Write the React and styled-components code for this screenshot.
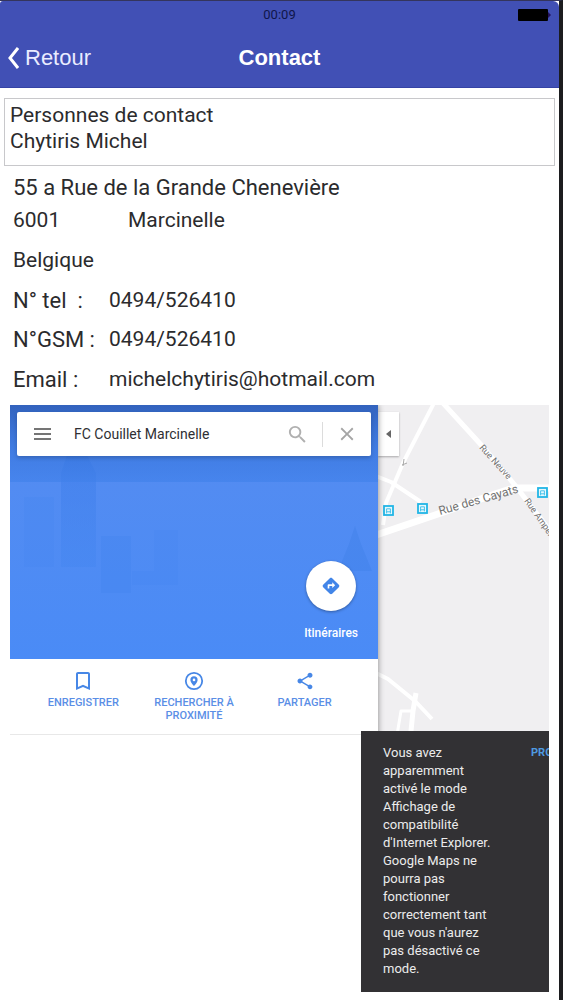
import React from 'react';
import styled, { createGlobalStyle } from 'styled-components';
import { MdBookmarkBorder, MdClose, MdDirections, MdSearch, MdShare } from 'react-icons/md';

const GlobalStyle = createGlobalStyle`
    * {
        box-sizing: border-box;
    }
    body {
        margin: 0;
        background-color: #fff;
        color: #2b2b2d;
        font-family: Roboto, "Liberation Sans", sans-serif;
    }
    button {
        border: none;
        padding: 0;
        background: none;
        font-family: inherit;
        cursor: pointer;
    }
`;

const Screen = styled.div`
    min-height: 100vh;
    display: flex;
    flex-direction: column;
    background-color: #fff;
    border-top: 1px solid #34355c;
    border-right: 4px solid #1c1d1f;
`;

const Header = styled.header`
    background-color: #4150b5;
    border-bottom: 1px solid #3543a5;
    border-radius: 3px 6px 0 0;
`;

const StatusBar = styled.div`
    height: 27px;
    padding: 0 8px;
    display: grid;
    grid-template-columns: 1fr auto 1fr;
    align-items: center;
    font-size: 13px;
    color: #10164a;
`;

const Clock = styled.span`
    grid-column: 2;
`;

const Battery = styled.svg`
    justify-self: end;
`;

const NavBar = styled.nav`
    height: 59px;
    padding: 0 8px;
    display: grid;
    grid-template-columns: 1fr auto 1fr;
    align-items: center;
    color: #fff;
    font-family: "Liberation Sans", Arial, sans-serif;
`;

const Back = styled.a`
    display: flex;
    align-items: center;
    gap: 6px;
    color: #e9ecff;
    font-size: 22px;
    text-decoration: none;
`;

const Title = styled.h1`
    margin: 0;
    font-size: 22px;
    font-weight: 700;
`;

const People = styled.section`
    height: 68px;
    margin: 10px 4px 0;
    padding: 3px 5px;
    border: 1px solid #c8c8cb;
    font-size: 21px;
    line-height: 26px;
`;

const Line = styled.p`
    margin: 0;
`;

const Details = styled.section`
    padding: 2px 13px 11px;
    font-size: 21px;
`;

const Row = styled.div`
    height: ${(props) => props.height || 40}px;
    display: grid;
    grid-template-columns: ${(props) => props.label || 96}px 1fr;
    align-items: center;
    white-space: pre;
`;

const Label = styled.span`
    font-size: 22px;
`;

const Address = styled.p`
    height: ${(props) => props.height}px;
    margin: 0;
    display: flex;
    align-items: center;
    font-size: ${(props) => props.size || 21}px;
`;

const MapFrame = styled.section`
    position: relative;
    margin: 0 10px 8px;
    flex: 1;
    min-height: 587px;
    display: grid;
    grid-template-columns: 368px 1fr;
    overflow: hidden;
`;

const Pane = styled.div`
    position: relative;
    z-index: 1;
    background-color: #fff;
    box-shadow: 0 0 6px rgba(0, 0, 0, 0.45);
`;

const Hero = styled.div`
    position: relative;
    height: 254px;
    padding: 7px;
    display: flex;
    flex-direction: column;
    justify-content: space-between;
    background-color: #4c8bf5;
`;

const Skyline = styled.svg`
    position: absolute;
    inset: 0;
    width: 100%;
    height: 100%;
`;

const SearchBox = styled.form`
    position: relative;
    height: 44px;
    padding: 0 13px 0 16px;
    display: flex;
    align-items: center;
    background-color: #fff;
    border-radius: 2px;
    box-shadow: 0 2px 4px rgba(0, 0, 0, 0.2);
`;

const SearchInput = styled.input`
    flex: 1;
    min-width: 0;
    margin-left: 23px;
    padding: 0;
    border: none;
    outline: none;
    font-family: inherit;
    font-size: 14px;
    color: #2f2f33;
`;

const IconButton = styled.button`
    height: 26px;
    display: flex;
    align-items: center;
    justify-content: center;
    color: ${(props) => props.color || '#757575'};
`;

const Divider = styled.span`
    width: 1px;
    height: 25px;
    margin: 0 13px;
    background-color: #dcdcdc;
`;

const Directions = styled.button`
    position: relative;
    align-self: flex-end;
    margin: 0 13px 12px 0;
    display: flex;
    flex-direction: column;
    align-items: center;
    gap: 15px;
    color: #fff;
    font-size: 12px;
    font-weight: 500;
    line-height: 14px;
`;

const Circle = styled.span`
    width: 50px;
    height: 50px;
    display: flex;
    align-items: center;
    justify-content: center;
    border-radius: 50%;
    background-color: #fff;
    color: #4285e8;
    box-shadow: 0 1px 3px rgba(0, 0, 0, 0.35);
`;

const Actions = styled.div`
    height: 76px;
    padding: 11px 18px 0;
    display: grid;
    grid-template-columns: repeat(3, 1fr);
    align-items: start;
    border-bottom: 1px solid #e8e8e8;
`;

const Action = styled.button`
    display: flex;
    flex-direction: column;
    align-items: center;
    gap: 4px;
    color: #5a8ee6;
    font-size: 11px;
    font-weight: 500;
    line-height: 13px;
`;

const ActionIcon = styled.span`
    height: 22px;
    display: flex;
    align-items: center;
    color: #4787e6;
`;

const MapArea = styled.div`
    position: relative;
    overflow: hidden;
    background-color: #f0eff1;
`;

const Streets = styled.svg`
    display: block;
    width: 100%;
    height: 100%;
    font-family: Roboto, sans-serif;
`;

const Collapse = styled.button`
    position: absolute;
    top: 7px;
    left: 0;
    width: 21px;
    height: 44px;
    display: flex;
    align-items: center;
    justify-content: center;
    background-color: #fff;
    box-shadow: 0 1px 2px rgba(0, 0, 0, 0.3);
`;

const Toast = styled.div`
    position: absolute;
    z-index: 2;
    right: 0;
    bottom: 0;
    width: 188px;
    padding: 13px 0 14px 22px;
    display: flex;
    gap: 40px;
    overflow: hidden;
    background-color: #323134;
    color: #ececec;
    font-size: 13px;
    line-height: 18px;
`;

const Message = styled.p`
    flex: 0 0 108px;
    margin: 0;
`;

const ToastLink = styled.a`
    color: #4f9ae0;
    font-size: 11px;
    font-weight: 700;
    text-decoration: none;
`;

const NearbyIcon = () => (
    <svg width="22" height="22" viewBox="0 0 22 22" fill="none">
        <circle cx="11" cy="11" r="8.2" stroke="currentColor" strokeWidth="1.8" />
        <path d="M11 6.3a3.6 3.6 0 0 0-3.6 3.6c0 2.4 3.6 6 3.6 6s3.6-3.6 3.6-6A3.6 3.6 0 0 0 11 6.3z" fill="currentColor" />
        <circle cx="11" cy="9.9" r="1.3" fill="#fff" />
    </svg>
);

const BusStop = ({ x, y }) => (
    <g transform={`translate(${x} ${y})`}>
        <rect width="9" height="9" fill="#e6f8fd" stroke="#22b5e6" strokeWidth="1.8" />
        <path d="M2.6 7.4V2.8h3.8v4.6M2.6 5.8h3.8" fill="none" stroke="#22b5e6" strokeWidth="0.8" />
    </g>
);

const App = () => {
    return (
        <Screen>
            <GlobalStyle />
            <Header>
                <StatusBar>
                    <Clock>00:09</Clock>
                    <Battery width="33" height="12" viewBox="0 0 33 12" fill="#000">
                        <rect width="30" height="12" rx="1" />
                        <path d="M30 3l3 3-3 3z" fill="#22105c" />
                    </Battery>
                </StatusBar>
                <NavBar>
                    <Back href="#">
                        <svg width="11" height="22" viewBox="0 0 11 22" fill="none" stroke="#fff" strokeWidth="3">
                            <path d="M10 1L2 11l8 10" />
                        </svg>
                        Retour
                    </Back>
                    <Title>Contact</Title>
                </NavBar>
            </Header>
            <People>
                <Line>Personnes de contact</Line>
                <Line>Chytiris Michel</Line>
            </People>
            <Details>
                <Address height={38} size={22}>55 a Rue de la Grande Chenevière</Address>
                <Row height={28} label={115}><span>6001</span><span>Marcinelle</span></Row>
                <Address height={52}>Belgique</Address>
                <Row height={28}><Label>N° tel  :</Label><span>0494/526410</span></Row>
                <Row height={50}><Label>N°GSM :</Label><span>0494/526410</span></Row>
                <Row height={30}><Label>Email :</Label><span>michelchytiris@hotmail.com</span></Row>
            </Details>
            <MapFrame>
                <Pane>
                    <Hero>
                        <Skyline>
                            <defs>
                                <linearGradient id="shade" x1="0" y1="0" x2="0" y2="1">
                                    <stop offset="0" stopColor="#2c5bb4" stopOpacity="0.85" />
                                    <stop offset="0.6" stopColor="#3472da" stopOpacity="0.6" />
                                    <stop offset="1" stopColor="#3f80ea" stopOpacity="0.6" />
                                </linearGradient>
                                <linearGradient id="haze" x1="0" y1="0" x2="0" y2="1">
                                    <stop offset="0" stopColor="#568cf0" />
                                    <stop offset="1" stopColor="#4a8bf6" />
                                </linearGradient>
                                <linearGradient id="tower" x1="0" y1="0" x2="0" y2="1">
                                    <stop offset="0" stopColor="#3c7be8" stopOpacity="0.5" />
                                    <stop offset="1" stopColor="#4285f0" stopOpacity="0.4" />
                                </linearGradient>
                            </defs>
                            <rect width="100%" height="254" fill="url(#haze)" />
                            <path d="M51 162V68l6-18h20l9 18v94z" fill="url(#tower)" />
                            <path d="M14 92h30v70H14zM144 125h24v55h-46v-14h22z" fill="#4384ee" opacity="0.2" />
                            <path d="M91 131h30v57H91z" fill="#4384ee" opacity="0.35" />
                            <path d="M345 121l6 18 11 27h-34l11-27z" fill="#4080e8" opacity="0.45" />
                            <rect width="100%" height="77" fill="url(#shade)" />
                        </Skyline>
                        <SearchBox onSubmit={(e) => e.preventDefault()}>
                            <IconButton type="button" aria-label="Menu">
                                <svg width="18" height="12" viewBox="0 0 18 12" fill="currentColor">
                                    <path d="M1 0h17v2H1zM1 5h17v2H1zM1 10h17v2H1z" />
                                </svg>
                            </IconButton>
                            <SearchInput aria-label="Rechercher" defaultValue="FC Couillet Marcinelle" />
                            <IconButton type="submit" color="#b0b0b0" aria-label="Lancer la recherche">
                                <MdSearch size={23} />
                            </IconButton>
                            <Divider />
                            <IconButton type="button" color="#a5a5a5" aria-label="Effacer">
                                <MdClose size={22} />
                            </IconButton>
                        </SearchBox>
                        <Directions>
                            <Circle><MdDirections size={20} /></Circle>
                            Itinéraires
                        </Directions>
                    </Hero>
                    <Actions>
                        <Action><ActionIcon><MdBookmarkBorder size={24} /></ActionIcon>ENREGISTRER</Action>
                        <Action><ActionIcon><NearbyIcon /></ActionIcon>RECHERCHER À PROXIMITÉ</Action>
                        <Action><ActionIcon><MdShare size={20} /></ActionIcon>PARTAGER</Action>
                    </Actions>
                </Pane>
                <MapArea>
                    <Streets>
                        <g fill="none" stroke="#fff" strokeLinejoin="round">
                            <path d="M56 -2L25 58 8 98l-3 22" strokeWidth="4" />
                            <path d="M-2 71l15 6 30 20" strokeWidth="4" />
                            <path d="M-2 130L60 109l60-21 16-5h40" strokeWidth="7" />
                            <path d="M64 -3l42 46 30 36 40 52" strokeWidth="5" />
                            <path d="M-2 268l12 6 27 22 17 18" strokeWidth="4" />
                            <path d="M38 288l-3 18-3 30" strokeWidth="5" />
                            <path d="M34 306H23l-4 24" strokeWidth="3" />
                        </g>
                        <path d="M25 61l1-7M24 60l5-2" stroke="#aaa" fill="none" />
                        <g fill="#727272">
                            <text transform="translate(62 110) rotate(-16)" fontSize="12">Rue des Cayats</text>
                            <text transform="translate(101 43) rotate(48)" fontSize="9">Rue Neuve</text>
                            <text transform="translate(146 96) rotate(55)" fontSize="9">Rue Ampère</text>
                        </g>
                        <BusStop x={6} y={101} />
                        <BusStop x={40} y={99} />
                        <BusStop x={160} y={83} />
                    </Streets>
                    <Collapse aria-label="Réduire le panneau">
                        <svg width="5" height="8" viewBox="0 0 5 8" fill="#666">
                            <path d="M5 0v8L0 4z" />
                        </svg>
                    </Collapse>
                </MapArea>
                <Toast>
                    <Message>
                        Vous avez apparemment activé le mode Affichage de compatibilité d'Internet Explorer.
                        Google Maps ne pourra pas fonctionner correctement tant que vous n'aurez pas désactivé ce mode.
                    </Message>
                    <ToastLink href="#">PRO</ToastLink>
                </Toast>
            </MapFrame>
        </Screen>
    );
};

export default App;
